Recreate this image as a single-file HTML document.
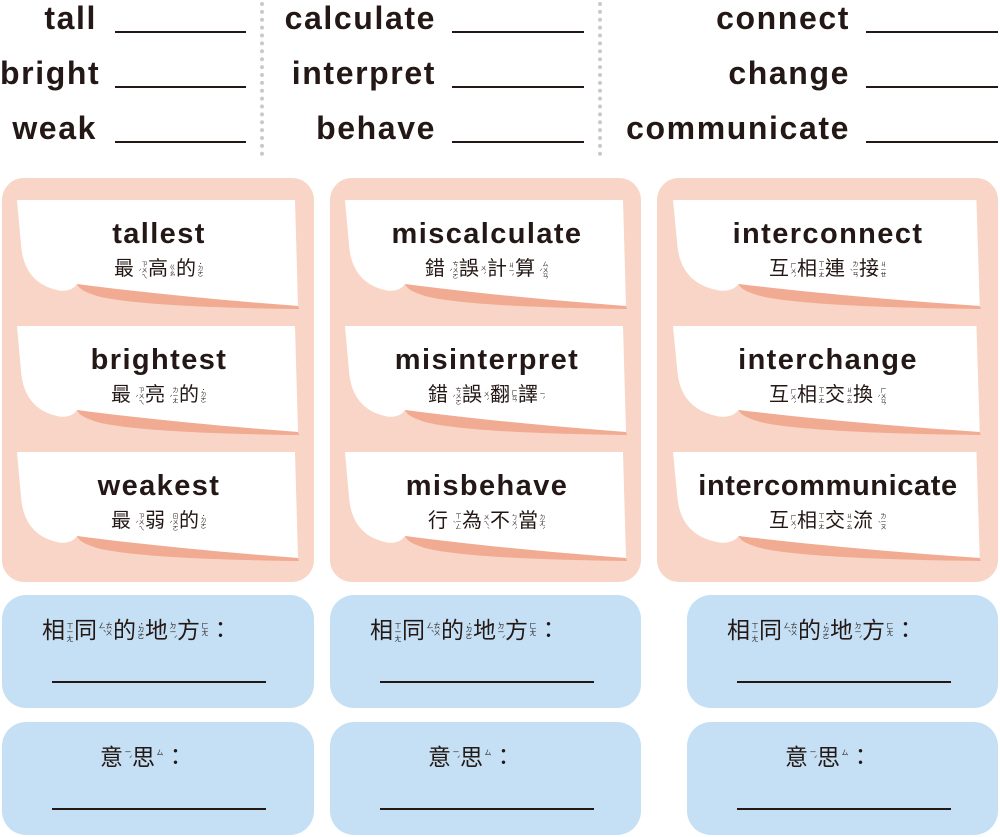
<!DOCTYPE html>
<html><head><meta charset="utf-8"><style>
*{margin:0;padding:0;box-sizing:border-box}
body{width:1000px;height:837px;background:#fff;position:relative;overflow:hidden;font-family:"Liberation Sans","Noto Sans CJK TC",sans-serif;color:#231815}
.w{position:absolute;font-weight:bold;font-size:32px;text-align:right;line-height:36px;letter-spacing:1.6px}
.ln{position:absolute;height:2px;background:#231815}
.dot{position:absolute;top:2px;width:0;height:154px;border-left:4px dotted #c9c9c9}
.panel{position:absolute;top:178px;height:404px;background:#f8d5c6;border-radius:22px}
.card{position:absolute;width:284px;height:110px}
.card svg{position:absolute;left:0;top:0}
.t{position:absolute;left:0;width:284px;text-align:center;top:18px;font-weight:bold;font-size:29px;letter-spacing:1.4px;line-height:32px}
.c{position:absolute;left:0;width:284px;text-align:center;top:54px;font-size:20px;line-height:26px;font-family:"Noto Sans CJK TC",sans-serif}
.z{font-size:6px;display:inline-block;writing-mode:vertical-rl;line-height:6px;vertical-align:middle;margin:0 1px;height:20px}
.blue{position:absolute;background:#c5e0f4;border-radius:24px;height:113px}
.bl{position:absolute;font-size:23px;font-family:"Noto Sans CJK TC",sans-serif;top:18px;line-height:30px}
.bl .z{font-size:7px;line-height:7px}
.bu{position:absolute;top:86px;height:2px;background:#231815;width:214px;left:50px}
</style></head><body>

<div class="w" style="left:0;width:97px;top:0">tall</div>
<div class="w" style="left:0;width:97px;top:55px">bright</div>
<div class="w" style="left:0;width:97px;top:110px">weak</div>
<div class="ln" style="left:115px;width:131px;top:31px"></div>
<div class="ln" style="left:115px;width:131px;top:86px"></div>
<div class="ln" style="left:115px;width:131px;top:141px"></div>
<div class="dot" style="left:260px"></div>

<div class="w" style="left:250px;width:186px;top:0">calculate</div>
<div class="w" style="left:250px;width:186px;top:55px">interpret</div>
<div class="w" style="left:250px;width:186px;top:110px">behave</div>
<div class="ln" style="left:452px;width:132px;top:31px"></div>
<div class="ln" style="left:452px;width:132px;top:86px"></div>
<div class="ln" style="left:452px;width:132px;top:141px"></div>
<div class="dot" style="left:598px"></div>

<div class="w" style="left:600px;width:850px;left:0;top:0">connect</div>
<div class="w" style="width:850px;left:0;top:55px">change</div>
<div class="w" style="width:850px;left:0;top:110px">communicate</div>
<div class="ln" style="left:866px;width:132px;top:31px"></div>
<div class="ln" style="left:866px;width:132px;top:86px"></div>
<div class="ln" style="left:866px;width:132px;top:141px"></div>

<div class="panel" style="left:2px;width:312px"></div>
<div class="panel" style="left:330px;width:311px"></div>
<div class="panel" style="left:657px;width:341px"></div>

<svg width="0" height="0" style="position:absolute"><defs>
<g id="cv">
<path d="M0,0 H278 L281,106 C200,100 120,92 60,84 C56,90 48,92 40,90 C18,85 6,70 4,45 Z" fill="#fff"/>
<path d="M60,84 C120,92 200,100 281,106 L282,109 C190,108 110,104 80,96 C68,92 62,89 60,84 Z" fill="#f1ab92"/>
</g></defs></svg>

<!-- column 1 -->
<div class="card" style="left:17px;top:200px"><svg width="284" height="110"><use href="#cv"/></svg><div class="t">tallest</div><div class="c">最<span class="z">ㄗㄨㄟˋ</span>高<span class="z">ㄍㄠ</span>的<span class="z">˙ㄉㄜ</span></div></div>
<div class="card" style="left:17px;top:326px"><svg width="284" height="110"><use href="#cv"/></svg><div class="t">brightest</div><div class="c">最<span class="z">ㄗㄨㄟˋ</span>亮<span class="z">ㄌㄧㄤˋ</span>的<span class="z">˙ㄉㄜ</span></div></div>
<div class="card" style="left:17px;top:452px"><svg width="284" height="110"><use href="#cv"/></svg><div class="t">weakest</div><div class="c">最<span class="z">ㄗㄨㄟˋ</span>弱<span class="z">ㄖㄨㄛˋ</span>的<span class="z">˙ㄉㄜ</span></div></div>

<!-- column 2 -->
<div class="card" style="left:345px;top:200px"><svg width="284" height="110"><use href="#cv"/></svg><div class="t">miscalculate</div><div class="c">錯<span class="z">ㄘㄨㄛˋ</span>誤<span class="z">ㄨˋ</span>計<span class="z">ㄐㄧˋ</span>算<span class="z">ㄙㄨㄢˋ</span></div></div>
<div class="card" style="left:345px;top:326px"><svg width="284" height="110"><use href="#cv"/></svg><div class="t">misinterpret</div><div class="c">錯<span class="z">ㄘㄨㄛˋ</span>誤<span class="z">ㄨˋ</span>翻<span class="z">ㄈㄢ</span>譯<span class="z">ㄧˋ</span></div></div>
<div class="card" style="left:345px;top:452px"><svg width="284" height="110"><use href="#cv"/></svg><div class="t">misbehave</div><div class="c">行<span class="z">ㄒㄧㄥˊ</span>為<span class="z">ㄨㄟˊ</span>不<span class="z">ㄅㄨˋ</span>當<span class="z">ㄉㄤˋ</span></div></div>

<!-- column 3 -->
<div class="card" style="left:673px;top:200px;width:310px"><svg width="310" height="110" viewBox="0 0 284 110" preserveAspectRatio="none"><use href="#cv"/></svg><div class="t" style="width:310px">interconnect</div><div class="c" style="width:310px">互<span class="z">ㄏㄨˋ</span>相<span class="z">ㄒㄧㄤ</span>連<span class="z">ㄌㄧㄢˊ</span>接<span class="z">ㄐㄧㄝ</span></div></div>
<div class="card" style="left:673px;top:326px;width:310px"><svg width="310" height="110" viewBox="0 0 284 110" preserveAspectRatio="none"><use href="#cv"/></svg><div class="t" style="width:310px">interchange</div><div class="c" style="width:310px">互<span class="z">ㄏㄨˋ</span>相<span class="z">ㄒㄧㄤ</span>交<span class="z">ㄐㄧㄠ</span>換<span class="z">ㄏㄨㄢˋ</span></div></div>
<div class="card" style="left:673px;top:452px;width:310px"><svg width="310" height="110" viewBox="0 0 284 110" preserveAspectRatio="none"><use href="#cv"/></svg><div class="t" style="width:310px;letter-spacing:.6px">intercommunicate</div><div class="c" style="width:310px">互<span class="z">ㄏㄨˋ</span>相<span class="z">ㄒㄧㄤ</span>交<span class="z">ㄐㄧㄠ</span>流<span class="z">ㄌㄧㄡˊ</span></div></div>

<!-- blue boxes -->
<div class="blue" style="left:2px;top:595px;width:312px"><div class="bl" style="left:40px">相<span class="z">ㄒㄧㄤ</span>同<span class="z">ㄊㄨㄥˊ</span>的<span class="z">˙ㄉㄜ</span>地<span class="z">ㄉㄧˋ</span>方<span class="z">ㄈㄤ</span>：</div><div class="bu"></div></div>
<div class="blue" style="left:330px;top:595px;width:311px"><div class="bl" style="left:40px">相<span class="z">ㄒㄧㄤ</span>同<span class="z">ㄊㄨㄥˊ</span>的<span class="z">˙ㄉㄜ</span>地<span class="z">ㄉㄧˋ</span>方<span class="z">ㄈㄤ</span>：</div><div class="bu"></div></div>
<div class="blue" style="left:687px;top:595px;width:311px"><div class="bl" style="left:40px">相<span class="z">ㄒㄧㄤ</span>同<span class="z">ㄊㄨㄥˊ</span>的<span class="z">˙ㄉㄜ</span>地<span class="z">ㄉㄧˋ</span>方<span class="z">ㄈㄤ</span>：</div><div class="bu"></div></div>

<div class="blue" style="left:2px;top:722px;width:312px"><div class="bl" style="left:98px">意<span class="z">ㄧˋ</span>思<span class="z">ㄙ</span>：</div><div class="bu"></div></div>
<div class="blue" style="left:330px;top:722px;width:311px"><div class="bl" style="left:98px">意<span class="z">ㄧˋ</span>思<span class="z">ㄙ</span>：</div><div class="bu"></div></div>
<div class="blue" style="left:687px;top:722px;width:311px"><div class="bl" style="left:98px">意<span class="z">ㄧˋ</span>思<span class="z">ㄙ</span>：</div><div class="bu"></div></div>

</body></html>
